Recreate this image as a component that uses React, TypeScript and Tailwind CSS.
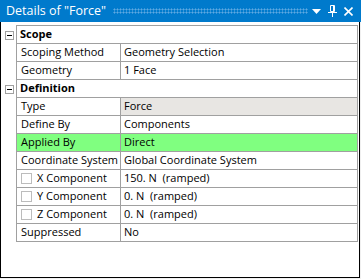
import React from 'react';

type Row =
    | { kind: 'header'; label: string }
    | { kind: 'prop'; name: string; value: string; check?: boolean; tone?: 'green' | 'gray' };

const rows: Row[] = [
    { kind: 'header', label: 'Scope' },
    { kind: 'prop', name: 'Scoping Method', value: 'Geometry Selection' },
    { kind: 'prop', name: 'Geometry', value: '1 Face' },
    { kind: 'header', label: 'Definition' },
    { kind: 'prop', name: 'Type', value: 'Force', tone: 'gray' },
    { kind: 'prop', name: 'Define By', value: 'Components' },
    { kind: 'prop', name: 'Applied By', value: 'Direct', tone: 'green' },
    { kind: 'prop', name: 'Coordinate System', value: 'Global Coordinate System' },
    { kind: 'prop', name: 'X Component', value: '150. N  (ramped)', check: true },
    { kind: 'prop', name: 'Y Component', value: '0. N  (ramped)', check: true },
    { kind: 'prop', name: 'Z Component', value: '0. N  (ramped)', check: true },
    { kind: 'prop', name: 'Suppressed', value: 'No' },
];

const CollapseBox: React.FC = () => (
    <div className="w-[9px] h-[9px] border border-[#a0a0a0] bg-white flex items-center justify-center">
        <div className="w-[5px] h-px bg-black" />
    </div>
);

export default function App() {
    return (
        <div className="w-[361px] h-[279px] bg-[#f0f0f0] text-black" style={{ fontFamily: '"Open Sans", "Noto Sans", sans-serif' }}>
            {/* Title bar */}
            <div className="h-[22px] bg-[#007acc] flex items-center pl-[6px] pr-[8px]">
                <span className="text-white text-[12.5px] leading-none whitespace-nowrap">Details of "Force"</span>
                <div className="flex-1 ml-[7px] mr-[4px] h-[6px] bg-[radial-gradient(#5fa9e2_45%,transparent_50%)] bg-[length:3px_3px]" />
                <div className="flex items-center gap-[7px]">
                    <svg width="9" height="5" viewBox="0 0 9 5"><path d="M0 0h9L4.5 5z" fill="#fff" /></svg>
                    <svg width="9" height="12" viewBox="0 0 9 12" fill="none" stroke="#fff">
                        <path d="M2.5 0.5h4v6h-4z" />
                        <path d="M5.5 1v5" strokeWidth="1" />
                        <path d="M0 7.5h9" />
                        <path d="M4.5 8v4" />
                    </svg>
                    <svg width="9" height="9" viewBox="0 0 9 9" stroke="#fff" strokeWidth="1.6"><path d="M0.5 0.5l8 8M8.5 0.5l-8 8" /></svg>
                </div>
            </div>

            {/* Details panel */}
            <div className="w-[360px] h-[256px] bg-white border-x border-b border-black pt-[3px] text-[11px]">
                <div className="w-[358px]">
                    {rows.map((row, i) => (
                        <div key={i} className={`flex ${i === 0 ? 'h-[19px]' : 'h-[18px]'}`}>
                            <div className={`w-[15px] flex items-center justify-center pl-px ${i === 0 ? 'pt-px' : ''}`}>
                                {row.kind === 'header' && <CollapseBox />}
                            </div>
                            <div
                                className={`w-[342px] flex border-x border-b border-[#a0a0a0] ${i === 0 ? 'border-t' : ''} ${
                                    row.kind === 'prop' && row.tone === 'green' ? 'bg-[#80ff80]' : ''
                                }`}
                            >
                                {row.kind === 'header' ? (
                                    <div className="pl-[3px] flex items-center font-bold">{row.label}</div>
                                ) : (
                                    <>
                                        <div className="w-[104px] border-r border-[#a0a0a0] flex items-center pl-[4px] whitespace-nowrap">
                                            {row.check && <div className="w-[11px] h-[11px] border border-[#bcbcbc] bg-white mr-[5px]" />}
                                            {row.name}
                                        </div>
                                        <div className={`flex-1 flex items-center pl-[3px] whitespace-pre ${row.tone === 'gray' ? 'bg-[#e8e6e3]' : ''}`}>
                                            {row.value}
                                        </div>
                                    </>
                                )}
                            </div>
                        </div>
                    ))}
                </div>
            </div>
        </div>
    );
}
